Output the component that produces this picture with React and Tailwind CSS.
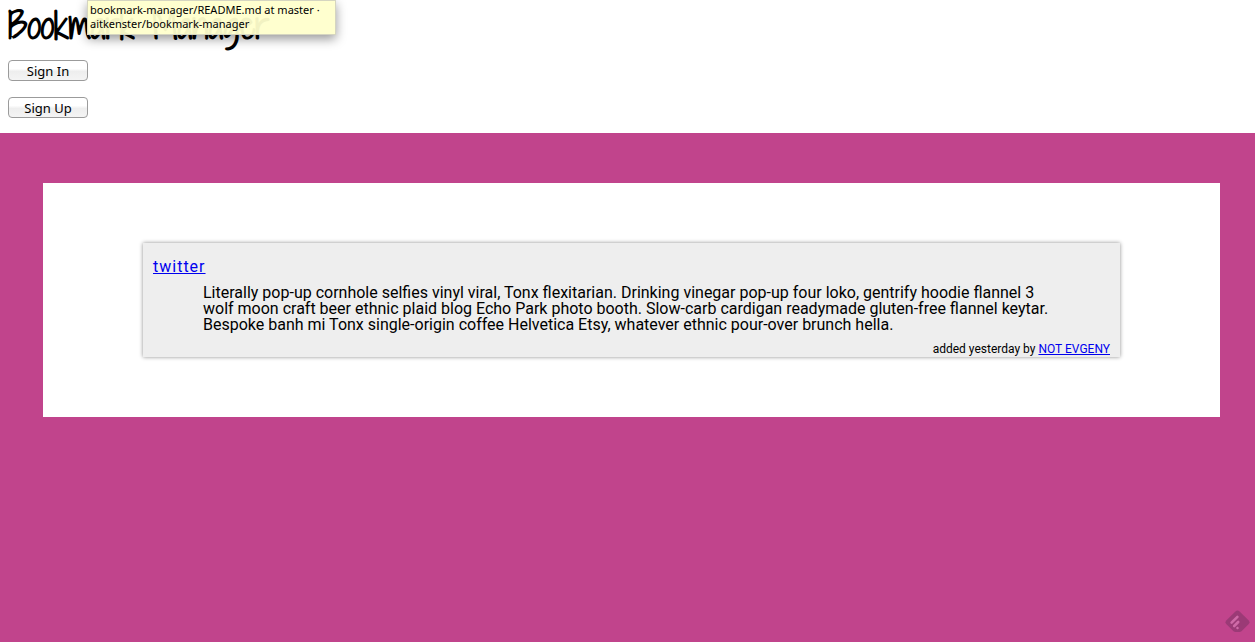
function ActionButton({ children }) {
  return (
    <button
      type="button"
      className="flex h-[21px] w-20 items-center justify-center rounded-[4px] border border-[#9b9b9b] bg-linear-to-b from-white from-40% via-[#eeeeee] via-55% to-[#f4f4f4] font-['Noto_Sans',sans-serif] text-[13px] leading-4 text-black"
    >
      {children}
    </button>
  );
}

function Tooltip({ children }) {
  return (
    <div
      role="tooltip"
      className="absolute top-0 left-[87px] w-[249px] border border-[#d5d5c0] bg-[#ffffcc]/95 px-[2px] pt-[2px] pb-[3px] font-['Noto_Sans',sans-serif] text-[11px] leading-[14px] text-black shadow-[0_4px_10px_rgba(0,0,0,0.4)]"
    >
      {children}
    </div>
  );
}

function Bookmark({ title, description, author }) {
  return (
    <article className="bg-[#eeeeee] px-[10px] pt-4 pb-[2px] shadow-[0_0_4px_rgba(0,0,0,0.45)]">
      <h2 className="text-base leading-4 tracking-[1px]">
        <a href="#twitter" className="text-[#0000ee] underline">
          {title}
        </a>
      </h2>
      <p className="mt-[10px] px-[50px] text-base leading-4">{description}</p>
      <p className="mt-[10px] text-right text-xs leading-3">
        added yesterday by{" "}
        <a href="#author" className="text-[#0000ee] underline">
          {author}
        </a>
      </p>
    </article>
  );
}

function CornerBadge() {
  return (
    <a href="#feed" aria-label="Add to feed" className="fixed right-[5px] bottom-2">
      <svg width="25" height="24" viewBox="0 0 25 24" fill="none">
        <path
          d="M10.4 1.5Q12.5-.5 14.6 1.5L23.5 10.3Q25.5 12.3 23.5 14.3L16.5 21.2Q15.6 22 14.3 22H10.7Q9.4 22 8.5 21.2L1.5 14.3Q-.5 12.3 1.5 10.3Z"
          fill="#9b3a76"
        />
        <path
          d="M6.6 12.6L12.4 6.8M9.2 16L13.2 12"
          stroke="#cf6aa7"
          strokeWidth="2.6"
          strokeLinecap="round"
        />
        <path d="M10.9 18L12.5 16.4L14.1 18L12.9 19.3H12.1Z" fill="#cf6aa7" />
      </svg>
    </a>
  );
}

export default function App() {
  return (
    <div className="flex min-h-screen flex-col bg-white font-['Roboto',sans-serif] text-black">
      <header className="relative px-2 pt-2 pb-[15px]">
        <h1 className="font-['Shadows_Into_Light_Two','Shadows_Into_Light','Liberation_Sans_Narrow',sans-serif] text-[35px] leading-9 font-bold">
          Bookmark Manager
        </h1>
        <Tooltip>
          bookmark-manager/README.md at master ·<br />
          aitkenster/bookmark-manager
        </Tooltip>
        <nav className="mt-4 flex flex-col items-start gap-4">
          <ActionButton>Sign In</ActionButton>
          <ActionButton>Sign Up</ActionButton>
        </nav>
      </header>
      <main className="grow bg-[#c1448c] pt-[50px] pr-[35px] pb-[50px] pl-[43px]">
        <section className="bg-white px-[100px] py-[60px]">
          <Bookmark
            title="twitter"
            description="Literally pop-up cornhole selfies vinyl viral, Tonx flexitarian. Drinking vinegar pop-up four loko, gentrify hoodie flannel 3 wolf moon craft beer ethnic plaid blog Echo Park photo booth. Slow-carb cardigan readymade gluten-free flannel keytar. Bespoke banh mi Tonx single-origin coffee Helvetica Etsy, whatever ethnic pour-over brunch hella."
            author="NOT EVGENY"
          />
        </section>
      </main>
      <CornerBadge />
    </div>
  );
}
